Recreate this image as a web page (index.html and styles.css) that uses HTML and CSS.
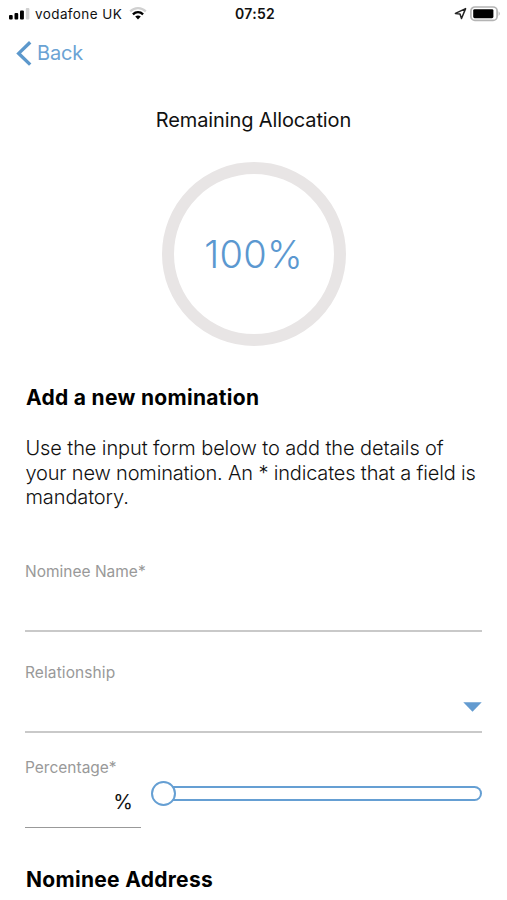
FILE: index.html
```html
<!DOCTYPE html>
<html lang="en">
<head>
<meta charset="utf-8">
<title>Add a new nomination</title>
<link rel="stylesheet" href="styles.css">
</head>
<body>
<header class="status">
  <div class="carrier">
    <svg class="signal" width="21" height="12" viewBox="0 0 21 12"><rect x="0" y="7" width="3.7" height="4.5" rx="1"/><rect x="5.5" y="5" width="3.7" height="6.5" rx="1"/><rect x="11" y="2.5" width="3.9" height="9" rx="1"/><rect x="16.8" y="0" width="3.6" height="11.5" rx="1" fill="#d0d0d0"/></svg>
    <span class="carrier-name">vodafone UK</span>
    <svg class="wifi" width="18" height="13" viewBox="0 0 18 13" fill="none"><path d="M1.2 4.4C5.7.1 12.3.1 16.8 4.4" stroke="#d0d0d0" stroke-width="2.2"/><path d="M3.9 7.3C6.9 4.5 11.1 4.5 14.1 7.3" stroke="#000" stroke-width="2.3"/><path d="M6.2 9.6C7.9 8.2 10.1 8.2 11.8 9.6L9 12.4Z" fill="#000"/></svg>
  </div>
  <time class="clock">07:52</time>
  <div class="power">
    <svg class="location" width="13" height="13" viewBox="0 0 13 13" fill="none" stroke="#222" stroke-width="1.5" stroke-linejoin="round"><path d="M11.6 1.6 1.4 6.4 6 6.9 7.5 11.5Z"/></svg>
    <svg class="battery" width="31" height="16" viewBox="0 0 31 16"><rect x=".9" y="1" width="26.2" height="13.4" rx="4" fill="#fff" stroke="#b4b4b4" stroke-width="1.7"/><rect x="3.2" y="3.2" width="20.2" height="9" rx="1.4"/><path d="M28.6 5.3Q31 7.7 28.6 10.1Z" fill="#b4b4b4"/></svg>
  </div>
</header>
<nav class="nav">
  <a class="back"><svg class="chevron" width="17" height="27" viewBox="0 0 17 27"><path d="M15.2 2.2 3.7 13.4 15.2 24.6" fill="none" stroke="#5c98cc" stroke-width="3.4"/></svg><span class="back-text">Back</span></a>
</nav>
<main>
  <section class="allocation">
    <h1 class="title">Remaining Allocation</h1>
    <div class="ring"><span class="ring-value">100%</span></div>
  </section>
  <h2 class="heading">Add a new nomination</h2>
  <p class="intro"><span class="l1">Use the input form below to add the details of</span><br><span class="l2">your new nomination. An * indicates that a field is</span><br><span class="l3">mandatory.</span></p>
  <form>
    <div class="field name"><label>Nominee Name*</label></div>
    <div class="field relation"><label>Relationship</label><svg class="caret" width="19" height="10" viewBox="0 0 19 10"><path d="M.3.3H18.7L9.5 9.7Z" fill="#639bd0"/></svg></div>
    <div class="percent-row">
      <div class="percent"><label>Percentage*</label><span class="unit">%</span></div>
      <div class="slider"><span class="knob"></span><span class="track"></span></div>
    </div>
  </form>
  <h2 class="heading address">Nominee Address</h2>
</main>
</body>
</html>
```
FILE: styles.css
```css
* { box-sizing: border-box; }
body { margin: 0; width: 507px; height: 900px; overflow: hidden; background: #fff; color: #111; font-family: Inter, "Liberation Sans", sans-serif; }
svg { display: block; flex: none; }
.status { display: grid; grid-template-columns: 1fr auto 1fr; align-items: center; height: 27px; padding: 0 6px 0 9px; }
.carrier, .power { display: flex; align-items: center; }
.carrier-name { margin-left: 5px; font-size: 13.5px; letter-spacing: .4px; white-space: nowrap; }
.wifi { margin-left: 7px; }
.clock { font-size: 14px; font-weight: 600; letter-spacing: .3px; }
.power { justify-content: flex-end; gap: 3px; }
.nav { height: 51px; padding: 12px 0 0 15px; }
.back { display: inline-flex; align-items: center; gap: 5px; color: #6ba3d4; font-size: 20px; line-height: 27px; letter-spacing: -.15px; }
.back-text { padding-top: 1px; }
main { padding: 0 25px; }
.allocation { display: flex; flex-direction: column; align-items: center; padding-top: 30px; }
.title { margin: 0; font-size: 20px; line-height: 24px; font-weight: 400; letter-spacing: -.12px; }
.ring { display: flex; align-items: center; justify-content: center; width: 184px; height: 184px; margin-top: 29.5px; border: 12px solid #e8e5e5; border-radius: 50%; }
.ring-value { color: #5b98d0; font-size: 38px; font-weight: 300; letter-spacing: .3px; }
.heading { margin: 39.5px 0 0 1px; font-size: 21px; line-height: 26px; font-weight: 650; letter-spacing: .3px; color: #000; }
.intro { margin: 25px 0 0 .5px; font-size: 20px; line-height: 24.5px; font-weight: 300; white-space: nowrap; }
.l1 { letter-spacing: -.11px; }
.l2 { letter-spacing: -.17px; }
.l3 { letter-spacing: -.11px; }
.field { display: flex; border-bottom: 2px solid #c9c9c9; }
label { font-size: 15.5px; line-height: 20px; color: #999; }
.name { height: 70px; margin-top: 52px; }
.relation { height: 70px; margin-top: 31px; justify-content: space-between; }
.relation label { letter-spacing: .1px; }
.caret { margin-top: 39px; }
.percent-row { display: flex; margin-top: 25px; }
.percent { display: flex; flex-direction: column; width: 116px; height: 70px; border-bottom: 1px solid #999; }
.unit { align-self: flex-end; margin: 12px 8px 0 0; font-size: 20px; line-height: 24px; }
.slider { display: flex; align-items: center; flex: 1; height: 25px; margin: 23px 0 0 10px; }
.knob { flex: none; width: 25px; height: 25px; border: 2px solid #659fd3; border-radius: 50%; background: #fff; z-index: 1; }
.track { flex: 1; height: 15px; margin-left: -3px; border: 2px solid #659fd3; border-left: 0; border-radius: 0 8px 8px 0; }
.address { margin-top: 39px; }
```
